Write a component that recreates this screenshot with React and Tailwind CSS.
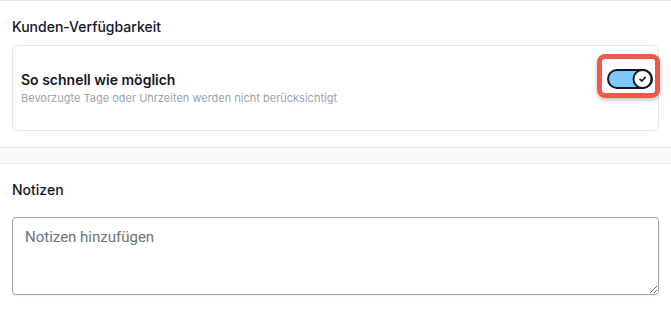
function Toggle() {
  return (
    <div className="relative w-[46px] h-[20px] shrink-0 -mr-[3px] -mt-[1px]">
      {/* highlight annotation */}
      <div className="absolute -left-[10px] -right-[7px] -top-[15px] -bottom-[9px] rounded-lg border-[5px] border-[#f0584b] shadow-[0_2px_4px_rgba(0,0,0,0.25)]" />
      <svg width="46" height="20" viewBox="0 0 46 20" className="block">
        <rect x="1" y="1" width="44" height="18" rx="9" fill="#7cc8f8" stroke="#141821" strokeWidth="2" />
        <circle cx="35.5" cy="10" r="9" fill="#ffffff" stroke="#141821" strokeWidth="2" />
        <path d="M33 10.3 L34.9 12 L38.2 8.4" fill="none" stroke="#141821" strokeWidth="1.7" strokeLinecap="round" strokeLinejoin="round" />
      </svg>
    </div>
  );
}

export default function App() {
  return (
    <div className="w-[671px] h-[309px] bg-white overflow-hidden" style={{ fontFamily: 'Inter, sans-serif' }}>
      {/* Availability */}
      <div className="border-t border-[#e5e7eb] px-3 pt-4 pb-4">
        <div className="text-sm font-medium text-[#111827] leading-5 mb-2">Kunden-Verfügbarkeit</div>
        <div className="border border-[#e5e7eb] rounded-md px-2 py-6 flex items-start justify-between">
          <div>
            <div className="text-sm font-semibold text-[#111827] leading-5">So schnell wie möglich</div>
            <div className="text-[11px] text-[#9ca3af] leading-4">Bevorzugte Tage oder Uhrzeiten werden nicht berücksichtigt</div>
          </div>
          <Toggle />
        </div>
      </div>

      {/* Divider band */}
      <div className="h-[17px] bg-[#f9fafb] border-y border-[#e5e7eb]" />

      {/* Notes */}
      <div className="px-3 pt-4">
        <div className="text-sm font-medium text-[#111827] leading-5 mb-[17px]">Notizen</div>
        <textarea
          placeholder="Notizen hinzufügen"
          className="block w-full h-[78px] border border-[#9ea1b0] rounded-[4px] px-3 py-2 text-[15px] text-[#111827] placeholder:text-[#6b7280] shadow-[0_1px_2px_rgba(0,0,0,0.05)] outline-none"
          style={{ fontFamily: 'Roboto, sans-serif' }}
        />
      </div>
    </div>
  );
}
